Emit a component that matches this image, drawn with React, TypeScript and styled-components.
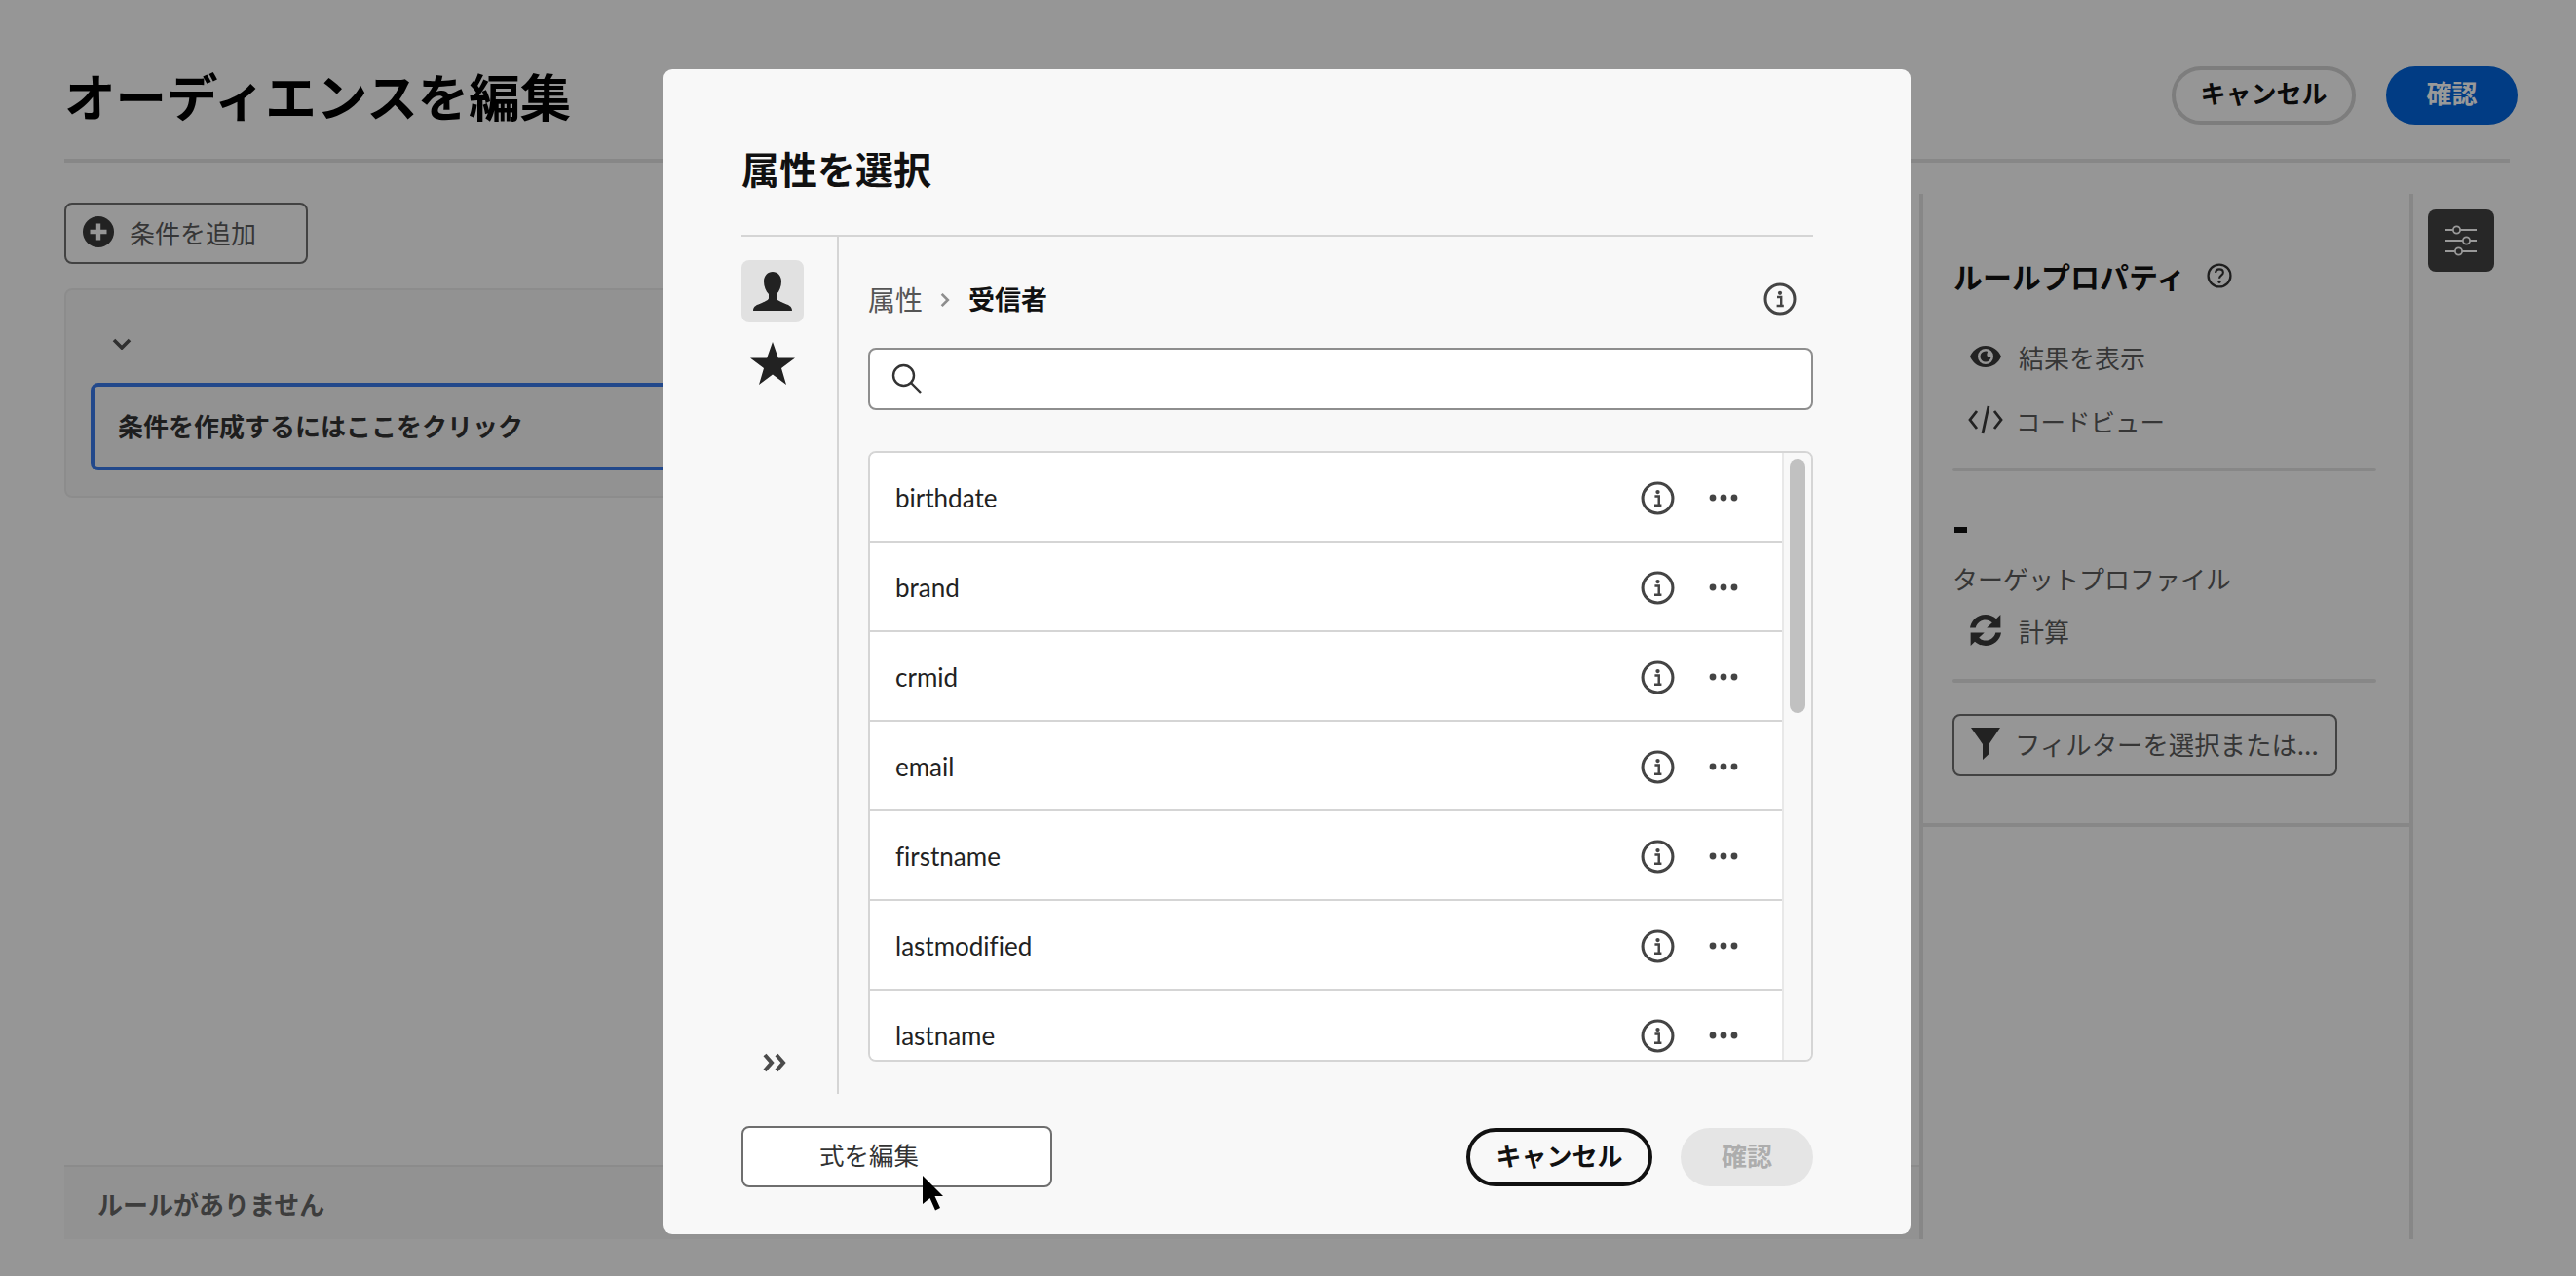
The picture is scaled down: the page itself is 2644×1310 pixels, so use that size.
import React from "react";
import styled, { createGlobalStyle } from "styled-components";

const JP = `"Noto Sans CJK JP", "Noto Sans", sans-serif`;

const Global = createGlobalStyle`
  * { box-sizing: border-box; }
  html, body { margin: 0; padding: 0; background: #fafafa; }
  body { font-family: ${JP}; color: #222; }
  button { font-family: inherit; margin: 0; }
`;

const Page = styled.div`
  position: relative;
  width: 2644px;
  height: 1310px;
  overflow: hidden;
  background: #fafafa;
  padding: 68px 68px 38px 66px;
  display: flex;
  flex-direction: column;
`;

const Header = styled.header`
  height: 99px;
  flex: none;
  display: flex;
  justify-content: space-between;
  align-items: flex-start;
  border-bottom: 4px solid #e1e1e1;
`;

const PageTitle = styled.h1`
  margin: 0;
  padding-top: 1px;
  font-size: 52.5px;
  line-height: 56px;
  font-weight: 700;
  color: #000;
`;

const HeaderActions = styled.div`
  display: flex;
  gap: 31px;
  margin-right: -8px;
`;

const Pill = styled.button<{ $kind: "ghost" | "outline" | "primary" | "disabled"; $w: number }>`
  width: ${(p) => p.$w}px;
  height: 60px;
  border-radius: 30px;
  font-size: 26px;
  line-height: 1;
  font-weight: 700;
  padding: 0 0 4px;
  display: flex;
  align-items: center;
  justify-content: center;
  border: 4px solid
    ${(p) => (p.$kind === "ghost" ? "#d0d0d0" : p.$kind === "outline" ? "#111" : "transparent")};
  background: ${(p) =>
    p.$kind === "primary" ? "#0265dc" : p.$kind === "disabled" ? "#e5e5e5" : "transparent"};
  color: ${(p) => (p.$kind === "primary" ? "#fff" : p.$kind === "disabled" ? "#adadad" : "#111")};
`;

const HeaderPill = styled(Pill)`
  padding-bottom: 7px;
`;

const Main = styled.main`
  flex: 1;
  min-height: 0;
  display: flex;
  padding-top: 32px;
`;

const Canvas = styled.section`
  width: 1904px;
  flex: none;
  display: flex;
  flex-direction: column;
`;

const OutlineButton = styled.button<{ $w: number; $gap: number; $pad: number }>`
  width: ${(p) => p.$w}px;
  height: 63px;
  flex: none;
  display: flex;
  align-items: center;
  gap: ${(p) => p.$gap}px;
  padding: 0 0 3px ${(p) => p.$pad}px;
  border: 2px solid #6e6e6e;
  border-radius: 8px;
  background: transparent;
  color: #5a5a5a;
  font-size: 26px;
  white-space: nowrap;
`;

const AddCondition = styled(OutlineButton)`
  margin-top: 9px;
`;

const ConditionCard = styled.div`
  margin: 25px 20px 0 0;
  height: 215px;
  background: #f4f4f4;
  border: 2px solid #eaeaea;
  border-radius: 8px;
  padding: 49px 24px 0 25px;
`;

const Chevron = styled.svg`
  display: block;
  width: 20px;
  height: 12px;
  margin-left: 22px;
`;

const ClauseBox = styled.div`
  margin-top: 34px;
  height: 90px;
  border: 4px solid #3a78e8;
  border-radius: 8px;
  display: flex;
  align-items: center;
  padding: 0 0 3px 24px;
  font-size: 26px;
  font-weight: 700;
  color: #333;
`;

const RulesStrip = styled.div`
  margin-top: auto;
  height: 76px;
  background: #f4f4f4;
  border-top: 2px solid #e8e8e8;
  padding: 0 0 0 34px;
  display: flex;
  align-items: center;
  font-size: 26px;
  font-weight: 700;
  color: #666;
`;

const Panel = styled.aside`
  width: 507px;
  flex: none;
  border-left: 4px solid #e1e1e1;
  border-right: 4px solid #e1e1e1;
`;

const PanelTop = styled.div`
  padding: 66px 34px 48px 30px;
  border-bottom: 4px solid #e1e1e1;
`;

const PanelTitle = styled.h2`
  margin: 0;
  display: flex;
  align-items: center;
  gap: 22px;
  padding-left: 1px;
  font-size: 30px;
  line-height: 36px;
  font-weight: 700;
  color: #111;
  white-space: nowrap;
`;

const ActionRow = styled.div<{ $top?: number }>`
  height: 64px;
  margin-top: ${(p) => p.$top ?? 0}px;
  display: flex;
  align-items: center;
  gap: 18px;
  padding-left: 18px;
  font-size: 26px;
  color: #5a5a5a;
`;

const CodeGlyph = styled.svg`
  display: block;
  flex: none;
  width: 36px;
  height: 32px;
  margin: 0 -5px 0 -2px;
`;

const CodeLabel = styled.span`
  font-size: 25.5px;
`;

const Divider = styled.div<{ $top: number }>`
  height: 4px;
  margin-top: ${(p) => p.$top}px;
  background: #e1e1e1;
  border-radius: 2px;
`;

const CountValue = styled.div`
  margin-top: 40px;
  height: 40px;
  display: flex;
  align-items: center;
  padding-left: 2px;
`;

const CountDash = styled.span`
  width: 13px;
  height: 6px;
  background: #111;
`;

const CountLabel = styled.div`
  margin-top: 12px;
  font-size: 26px;
  line-height: 36px;
  color: #5a5a5a;
  white-space: nowrap;
`;

const FilterButton = styled(OutlineButton)`
  margin-top: 32px;
  height: 64px;
  font-size: 26.4px;
`;

const ToolRail = styled.div`
  flex: 1;
  padding: 16px 0 0 15px;
`;

const ToolButton = styled.button`
  width: 68px;
  height: 64px;
  padding: 0;
  border: 0;
  border-radius: 8px;
  background: #414141;
  display: flex;
  align-items: center;
  justify-content: center;
`;

const Scrim = styled.div`
  position: absolute;
  inset: 0;
  background: rgba(0, 0, 0, 0.4);
`;

const Modal = styled.div`
  position: absolute;
  left: 681px;
  top: 71px;
  width: 1280px;
  height: 1196px;
  background: #f8f8f8;
  border-radius: 9px;
  padding: 75px 100px 0 80px;
  display: flex;
  flex-direction: column;
`;

const ModalTitle = styled.h2`
  margin: 0;
  height: 97px;
  flex: none;
  border-bottom: 2px solid #d5d5d5;
  font-size: 39px;
  line-height: 52px;
  font-weight: 700;
  color: #111;
`;

const ModalBody = styled.div`
  height: 880px;
  flex: none;
  display: flex;
`;

const SideNav = styled.nav`
  width: 100px;
  flex: none;
  border-right: 2px solid #d5d5d5;
  padding-top: 24px;
  display: flex;
  flex-direction: column;
  gap: 10px;
`;

const SideButton = styled.div<{ $active?: boolean }>`
  width: 64px;
  height: 64px;
  border-radius: 8px;
  background: ${(p) => (p.$active ? "#e1e1e1" : "transparent")};
  display: flex;
  align-items: center;
  justify-content: center;
`;

const ExpandButton = styled(SideButton)`
  margin-top: auto;
  margin-left: 2px;
`;

const Content = styled.div`
  flex: 1;
  min-width: 0;
  padding: 42px 0 0 30px;
  display: flex;
  flex-direction: column;
`;

const Breadcrumb = styled.div`
  height: 44px;
  flex: none;
  display: flex;
  align-items: center;
  font-size: 28px;
  padding-bottom: 1px;
`;

const CrumbParent = styled.span`
  color: #555;
`;

const CrumbSep = styled.svg`
  width: 10px;
  height: 16px;
  margin: 3px 19px 0 18px;
`;

const CrumbCurrent = styled.span`
  font-size: 27px;
  font-weight: 700;
  color: #111;
`;

const CrumbInfo = styled.div`
  margin-left: auto;
  margin-right: 17px;
  display: flex;
`;

const SearchBox = styled.div`
  margin-top: 28px;
  height: 64px;
  flex: none;
  border: 2px solid #8e8e8e;
  border-radius: 8px;
  background: #fff;
  display: flex;
  align-items: center;
  padding: 0 0 0 22px;
`;

const ListFrame = styled.div`
  margin-top: 42px;
  height: 627px;
  flex: none;
  border: 2px solid #d5d5d5;
  border-radius: 8px;
  overflow: hidden;
  display: flex;
`;

const Rows = styled.div`
  flex: 1;
  min-width: 0;
  background: #fff;
`;

const Row = styled.div`
  height: 92px;
  border-bottom: 2px solid #d5d5d5;
  display: flex;
  align-items: center;
  padding: 2px 0 0 26px;
  font-family: "Lato", "Noto Sans", sans-serif;
  font-size: 26px;
  font-variant-ligatures: none;
  color: #222;
`;

const RowName = styled.span`
  flex: 1;
  padding-bottom: 1px;
`;

const RowIcons = styled.div`
  width: 145px;
  flex: none;
  display: flex;
  align-items: center;
  gap: 35px;
`;

const ScrollTrack = styled.div`
  width: 30px;
  flex: none;
  background: #f8f8f8;
  border-left: 2px solid #e8e8e8;
  padding: 6px 0 0 6px;
`;

const ScrollThumb = styled.div`
  width: 16px;
  height: 261px;
  border-radius: 8px;
  background: #c1c1c1;
`;

const ModalFooter = styled.footer`
  margin-top: 33px;
  display: flex;
  align-items: center;
  gap: 29px;
`;

const ExprWrap = styled.div`
  position: relative;
  margin-right: auto;
  display: flex;
`;

const ExprButton = styled.button`
  width: 319px;
  height: 63px;
  padding: 0 0 6px 78px;
  border: 2px solid #6e6e6e;
  border-radius: 8px;
  background: #fff;
  color: #333;
  font-size: 25.5px;
  text-align: left;
`;

const Cursor = styled.svg`
  position: absolute;
  left: 186px;
  top: 51px;
  width: 22px;
  height: 36px;
`;

const IconSvg = styled.svg`
  display: block;
  flex: none;
`;

const InfoIcon = ({ size = 35 }: { size?: number }) => (
  <IconSvg width={size} height={size} viewBox="0 0 34 34" fill="none">
    <circle cx="17" cy="17" r="15" stroke="#444" strokeWidth="3" />
    <circle cx="17" cy="10.8" r="2.1" fill="#444" />
    <path d="M14 15h4.2v8.2M13.6 24h7.2" stroke="#444" strokeWidth="2.4" />
  </IconSvg>
);

const Dots = () => (
  <IconSvg width="30" height="8" viewBox="0 0 30 8" fill="#444">
    <circle cx="4" cy="4" r="3.4" />
    <circle cx="15" cy="4" r="3.4" />
    <circle cx="26" cy="4" r="3.4" />
  </IconSvg>
);

const names = ["birthdate", "brand", "crmid", "email", "firstname", "lastmodified", "lastname"];

export default function App() {
  return (
    <Page>
      <Global />
      <Header>
        <PageTitle>オーディエンスを編集</PageTitle>
        <HeaderActions>
          <HeaderPill $kind="ghost" $w={189}>キャンセル</HeaderPill>
          <HeaderPill $kind="primary" $w={135}>確認</HeaderPill>
        </HeaderActions>
      </Header>
      <Main>
        <Canvas>
          <AddCondition $w={250} $gap={16} $pad={17}>
            <IconSvg width="32" height="32" viewBox="0 0 32 32">
              <circle cx="16" cy="16" r="16" fill="#3a3a3a" />
              <path d="M16 7.5v17M7.5 16h17" stroke="#fafafa" strokeWidth="4.4" />
            </IconSvg>
            条件を追加
          </AddCondition>
          <ConditionCard>
            <Chevron viewBox="0 0 20 12" fill="none">
              <path d="M2 2l8 8 8-8" stroke="#505050" strokeWidth="3.6" />
            </Chevron>
            <ClauseBox>条件を作成するにはここをクリック</ClauseBox>
          </ConditionCard>
          <RulesStrip>ルールがありません</RulesStrip>
        </Canvas>
        <Panel>
          <PanelTop>
            <PanelTitle>
              ルールプロパティ
              <IconSvg width="26" height="26" viewBox="0 0 25 25" fill="none">
                <circle cx="12.5" cy="12.5" r="11" stroke="#333" strokeWidth="2.2" />
                <path d="M8.8 9.6c0-2.2 1.6-3.5 3.7-3.5s3.7 1.300 3.700 3.200c0 2.800-3.700 2.800-3.700 5.800" stroke="#333" strokeWidth="2" />
                <circle cx="12.500" cy="18.600" r="1.500" fill="#333" />
              </IconSvg>
            </PanelTitle>
            <ActionRow $top={33}>
              <IconSvg width="32" height="32" viewBox="0 0 32 32">
                <path fillRule="evenodd" fill="#3a3a3a" d="M0 16C3 9 9 5 16 5s13 4 16 11c-3 7-9 11-16 11S3 23 0 16zM16 8a8 8 0 100 16 8 8 0 000-16z" />
                <path fill="#3a3a3a" d="M16 10.500a5.500 5.500 0 105.500 5.500c-1 1-2.400 1-3.400 0-1-1-1-2.800 0-5.100-.6-.3-1.300-.4-2.100-.4z" />
              </IconSvg>
              結果を表示
            </ActionRow>
            <ActionRow $top={1}>
              <CodeGlyph viewBox="0 0 36 32" fill="none" stroke="#3a3a3a" strokeWidth="2.8">
                <path d="M9 7L2 16l7 9M27 7l7 9-7 9M21 2l-6 28" />
              </CodeGlyph>
              <CodeLabel>コードビュー</CodeLabel>
            </ActionRow>
            <Divider $top={17} />
            <CountValue><CountDash /></CountValue>
            <CountLabel>ターゲットプロファイル</CountLabel>
            <ActionRow $top={3}>
              <IconSvg width="32" height="32" viewBox="3.5 3 25 26" preserveAspectRatio="none" fill="#3a3a3a">
                <path d="M3.500 14C4.500 7.500 9.700 3 16 3c3.300 0 6.300 1.300 8.600 3.500L28 3v11H17l4.300-4.300C19.900 8.300 18 7.400 16 7.400c-4 0-7.300 2.800-8 6.600z" />
                <path d="M28.500 18C27.500 24.500 22.300 29 16 29c-3.300 0-6.300-1.300-8.600-3.500L4 29V18h11l-4.300 4.300c1.400 1.400 3.300 2.300 5.300 2.300 4 0 7.300-2.800 8-6.600z" />
              </IconSvg>
              計算
            </ActionRow>
            <Divider $top={18} />
            <FilterButton $w={395} $gap={15} $pad={17}>
              <IconSvg width="30" height="33" viewBox="0 0 30 33" fill="#3a3a3a">
                <path d="M0 0H30L18.500 17V27L12 33V17Z" />
              </IconSvg>
              フィルターを選択または...
            </FilterButton>
          </PanelTop>
        </Panel>
        <ToolRail>
          <ToolButton>
            <IconSvg width="34" height="34" viewBox="0 0 34 34" fill="none" stroke="#fff" strokeWidth="1.800">
              <path d="M1 6h8M16 6h17M1 17h18M26 17h7M1 28h10M18 28h15" />
              <circle cx="12.500" cy="6" r="3.600" />
              <circle cx="22.500" cy="17" r="3.600" />
              <circle cx="14.500" cy="28" r="3.600" />
            </IconSvg>
          </ToolButton>
        </ToolRail>
      </Main>
      <Scrim />
      <Modal>
        <ModalTitle>属性を選択</ModalTitle>
        <ModalBody>
          <SideNav>
            <SideButton $active>
              <IconSvg width="40" height="40" viewBox="0 0 40 40" fill="#222">
                <path d="M20 0c-5 0-9 4-9 10 0 5 2 10 5 13v4c0 2-3 3-7 5-5 2-9 3-9 8h40c0-5-4-6-9-8-4-2-7-3-7-5v-4c3-3 5-8 5-13 0-6-4-10-9-10z" />
              </IconSvg>
            </SideButton>
            <SideButton>
              <IconSvg width="46" height="44" viewBox="0 0 46 44" fill="#222">
                <path d="M23 0l5.800 16.500H46L32 27l5 17-14-10.400L9 44l5-17L0 16.500h17.200z" />
              </IconSvg>
            </SideButton>
            <ExpandButton>
              <IconSvg width="25" height="20" viewBox="0 0 25 20" fill="none" stroke="#4b4b4b" strokeWidth="4">
                <path d="M2 2l7 8-7 8M14 2l7 8-7 8" />
              </IconSvg>
            </ExpandButton>
          </SideNav>
          <Content>
            <Breadcrumb>
              <CrumbParent>属性</CrumbParent>
              <CrumbSep viewBox="0 0 9 14" fill="none">
                <path d="M1.500 1.500L7 7l-5.500 5.500" stroke="#8e8e8e" strokeWidth="2.400" />
              </CrumbSep>
              <CrumbCurrent>受信者</CrumbCurrent>
              <CrumbInfo><InfoIcon size={34} /></CrumbInfo>
            </Breadcrumb>
            <SearchBox>
              <IconSvg width="32" height="32" viewBox="0 0 32 32" fill="none" stroke="#333" strokeWidth="2.400">
                <circle cx="12.500" cy="12.500" r="10.500" />
                <path d="M20 20l10 10" />
              </IconSvg>
            </SearchBox>
            <ListFrame>
              <Rows>
                {names.map((name) => (
                  <Row key={name}>
                    <RowName>{name}</RowName>
                    <RowIcons>
                      <InfoIcon />
                      <Dots />
                    </RowIcons>
                  </Row>
                ))}
              </Rows>
              <ScrollTrack><ScrollThumb /></ScrollTrack>
            </ListFrame>
          </Content>
        </ModalBody>
        <ModalFooter>
          <ExprWrap>
            <ExprButton>式を編集</ExprButton>
            <Cursor viewBox="0 0 22 36">
              <path d="M0 0L21 21H12.500L18 33L13 35.500L7.500 23L0 29Z" fill="#000" />
            </Cursor>
          </ExprWrap>
          <Pill $kind="outline" $w={191}>キャンセル</Pill>
          <Pill $kind="disabled" $w={136}>確認</Pill>
        </ModalFooter>
      </Modal>
    </Page>
  );
}
